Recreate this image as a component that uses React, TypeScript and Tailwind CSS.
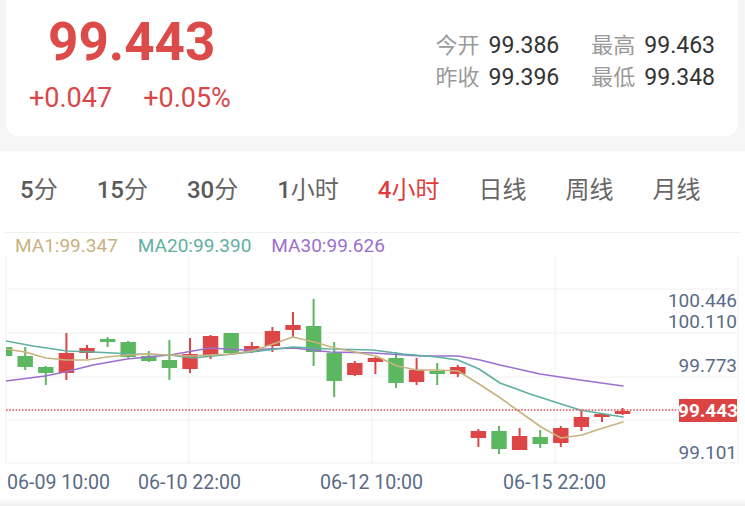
import React from "react";

type Candle = { bt: number; bb: number; wt: number; wb: number; up: boolean };

const candles: Candle[] = [
  { bt: 348, bb: 357, wt: 345, wb: 359, up: false },
  { bt: 357, bb: 368, wt: 348, wb: 371, up: false },
  { bt: 368, bb: 374, wt: 367, wb: 386, up: false },
  { bt: 354, bb: 374, wt: 334, wb: 381, up: true },
  { bt: 349, bb: 354, wt: 346, wb: 360, up: true },
  { bt: 340, bb: 343, wt: 338, wb: 348, up: false },
  { bt: 343, bb: 358, wt: 342, wb: 359, up: false },
  { bt: 357, bb: 362, wt: 352, wb: 363, up: false },
  { bt: 361, bb: 369, wt: 341, wb: 381, up: false },
  { bt: 355, bb: 370, wt: 339, wb: 374, up: true },
  { bt: 337, bb: 356, wt: 336, wb: 360, up: true },
  { bt: 334, bb: 354, wt: 334, wb: 355, up: false },
  { bt: 347, bb: 353, wt: 343, wb: 354, up: true },
  { bt: 332, bb: 347, wt: 328, wb: 353, up: true },
  { bt: 326, bb: 331, wt: 313, wb: 338, up: true },
  { bt: 327, bb: 353, wt: 300, wb: 367, up: false },
  { bt: 354, bb: 382, wt: 343, wb: 398, up: false },
  { bt: 364, bb: 376, wt: 362, wb: 377, up: true },
  { bt: 359, bb: 363, wt: 358, wb: 375, up: true },
  { bt: 359, bb: 384, wt: 353, wb: 389, up: false },
  { bt: 371, bb: 383, wt: 359, wb: 386, up: true },
  { bt: 372, bb: 375, wt: 364, wb: 386, up: false },
  { bt: 368, bb: 375, wt: 366, wb: 378, up: true },
  { bt: 432, bb: 439, wt: 430, wb: 448, up: true },
  { bt: 432, bb: 450, wt: 427, wb: 455, up: false },
  { bt: 437, bb: 451, wt: 429, wb: 451, up: true },
  { bt: 438, bb: 445, wt: 431, wb: 449, up: false },
  { bt: 429, bb: 444, wt: 427, wb: 448, up: true },
  { bt: 418, bb: 428, wt: 411, wb: 432, up: true },
  { bt: 415, bb: 418, wt: 414, wb: 423, up: true },
  { bt: 412, bb: 415, wt: 409, wb: 416, up: true },
];

const ma1 =
  "6,350 25,353 46,359 66,361 87,361 107,358 128,356 149,355 169,356 190,357 210,356 231,355 252,352 273,345 293,338 314,343 335,349 355,353 376,357 397,367 417,371 438,371 458,372 479,385 499,398 520,413 541,428 561,439 582,436 603,429 623,423";
const ma20 =
  "6,342 33,347 67,352 93,353 133,355 170,356 193,359 233,355 260,352 293,348 330,350 373,351 403,355 437,358 458,361 479,370 500,384 530,395 580,411 623,418";
const ma30 =
  "6,382 45,377 65,373 93,366 127,360 170,356 210,349 243,351 293,349 330,353 373,354 420,357 458,357 480,361 500,366 540,375 580,381 623,387";

const RED = "#dc4646";
const GREEN = "#5cb860";
const AXIS = "#5b6b86";

function Chart() {
  const hLines = [290, 334, 378, 421, 464];
  const vLines = [6, 189, 372, 555, 738];
  return (
    <svg width={745} height={242} viewBox="0 257 745 242" className="block shrink-0">
      <defs>
        <clipPath id="plot">
          <rect x={6} y={256} width={732} height={210} />
        </clipPath>
      </defs>
      {hLines.map((y) => (
        <line key={"h" + y} x1={6} x2={738} y1={y} y2={y} stroke="#f1f1f1" strokeWidth={1} />
      ))}
      {vLines.map((x) => (
        <line key={"v" + x} x1={x} x2={x} y1={257} y2={464} stroke="#f1f1f1" strokeWidth={1} />
      ))}
      <g clipPath="url(#plot)">
        {candles.map((c, i) => {
          const cx = 4.6 + 20.6 * i;
          const col = c.up ? RED : GREEN;
          return (
            <g key={i}>
              <rect x={cx - 1} y={c.wt} width={2} height={c.wb - c.wt} fill={col} />
              <rect x={cx - 7.7} y={c.bt} width={15.4} height={Math.max(c.bb - c.bt, 2)} fill={col} />
            </g>
          );
        })}
        <polyline points={ma30} fill="none" stroke="#9b70cc" strokeWidth={1.6} strokeLinejoin="round" strokeLinecap="round" />
        <polyline points={ma20} fill="none" stroke="#5fb0a0" strokeWidth={1.6} strokeLinejoin="round" strokeLinecap="round" />
        <polyline points={ma1} fill="none" stroke="#c9b27f" strokeWidth={1.6} strokeLinejoin="round" strokeLinecap="round" />
      </g>
      <line x1={6} x2={679} y1={411} y2={411} stroke="#e05252" strokeWidth={1.6} strokeDasharray="1.6 1.6" />
      <g fontFamily="Roboto, 'Noto Sans', sans-serif" fontSize={19} fill={AXIS} textAnchor="end">
        <text x={737} y={308}>100.446</text>
        <text x={737} y={329}>100.110</text>
        <text x={737} y={373}>99.773</text>
        <text x={737} y={460}>99.101</text>
      </g>
      <rect x={679} y={400} width={58} height={23} fill="#dc4444" />
      <text x={708} y={418} textAnchor="middle" fontFamily="Roboto, sans-serif" fontSize={19} fontWeight={700} fill="#ffffff">
        99.443
      </text>
      <g fontFamily="Roboto, 'Noto Sans', sans-serif" fontSize={19.6} fill={AXIS}>
        <text x={7} y={490}>06-09 10:00</text>
        <text x={138} y={490}>06-10 22:00</text>
        <text x={320} y={490}>06-12 10:00</text>
        <text x={503} y={490}>06-15 22:00</text>
      </g>
    </svg>
  );
}

function Stat({ label, value }: { label: string; value: string }) {
  return (
    <div className="flex items-baseline leading-[32px]">
      <span className="text-[#9a9a9a] text-[22px] w-[42px] whitespace-nowrap">{label}</span>
      <span className="ml-[11px] text-[23px] text-[#333333]">{value}</span>
    </div>
  );
}

const tabs: { num: string; cjk: string; active?: boolean }[] = [
  { num: "5", cjk: "分" },
  { num: "15", cjk: "分" },
  { num: "30", cjk: "分" },
  { num: "1", cjk: "小时" },
  { num: "4", cjk: "小时", active: true },
  { num: "", cjk: "日线" },
  { num: "", cjk: "周线" },
  { num: "", cjk: "月线" },
];

export default function App() {
  return (
    <div
      className="w-[745px] h-[506px] overflow-hidden bg-[#f6f6f6] flex flex-col"
      style={{ fontFamily: "Roboto, 'Noto Sans CJK SC', 'Noto Sans', sans-serif" }}
    >
      {/* Header card */}
      <div className="ml-[6px] w-[732px] h-[136px] shrink-0 bg-white rounded-b-[12px] flex justify-between">
        <div className="pl-[23px] pt-[16px]">
          <div className="ml-[19px] text-[53px] font-bold leading-none text-[#dc4a4a]">99.443</div>
          <div className="mt-[16px] flex gap-[31px] text-[27px] leading-none text-[#d9474a]">
            <span>+0.047</span>
            <span>+0.05%</span>
          </div>
        </div>
        <div className="pr-[23px] pt-[30px] flex gap-[32px]">
          <div className="flex flex-col">
            <Stat label="今开" value="99.386" />
            <Stat label="昨收" value="99.396" />
          </div>
          <div className="flex flex-col">
            <Stat label="最高" value="99.463" />
            <Stat label="最低" value="99.348" />
          </div>
        </div>
      </div>

      {/* Chart panel */}
      <div className="mt-[15px] flex-1 bg-white flex flex-col">
        <div className="mx-[5px] border-b border-[#f0f0f0] pl-[15px] pt-[25px] pb-[28px] flex gap-[39px] text-[24px] leading-[28px]">
          {tabs.map((t, i) => (
            <span key={i} className={t.active ? "text-[#e03c3c]" : "text-[#5a5a5a]"}>
              {t.num && <span className="font-medium">{t.num}</span>}
              <span className={t.active ? "" : "text-[#666666]"}>{t.cjk}</span>
            </span>
          ))}
        </div>
        <div className="h-[23px] pl-[15px] pt-[3px] flex gap-[20px] text-[19px] leading-[20px]">
          <span className="text-[#c9b27f]">MA1:99.347</span>
          <span className="text-[#5fb0a0]">MA20:99.390</span>
          <span className="text-[#9b70cc]">MA30:99.626</span>
        </div>
        <Chart />
        <div className="flex-1 bg-gradient-to-b from-white to-[#efefef]" />
      </div>
    </div>
  );
}
